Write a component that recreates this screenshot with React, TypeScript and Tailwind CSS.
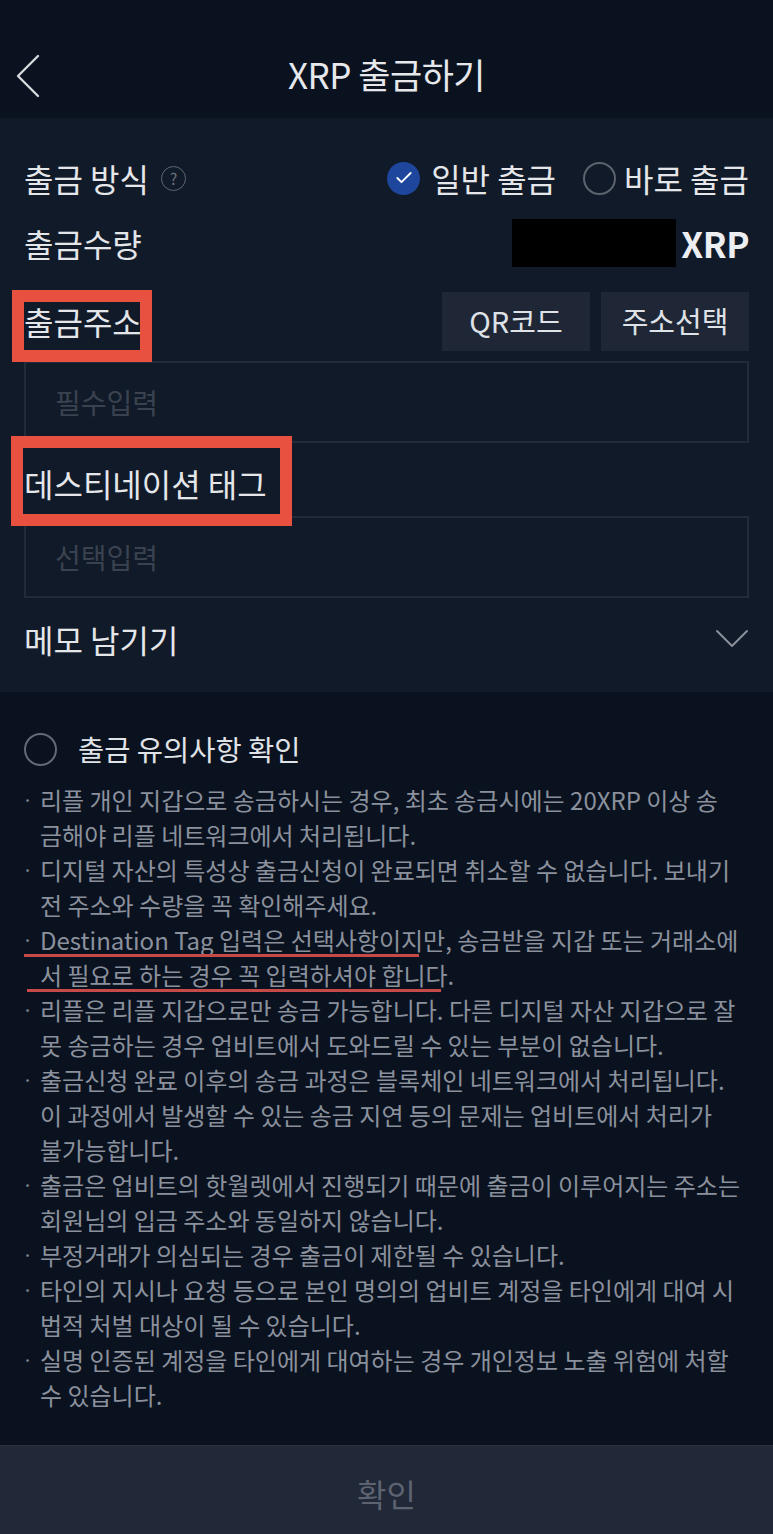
import { Check } from 'lucide-react'

const notices = [
  ['리플 개인 지갑으로 송금하시는 경우, 최초 송금시에는 20XRP 이상 송', '금해야 리플 네트워크에서 처리됩니다.'],
  ['디지털 자산의 특성상 출금신청이 완료되면 취소할 수 없습니다. 보내기', '전 주소와 수량을 꼭 확인해주세요.'],
  ['Destination Tag 입력은 선택사항이지만, 송금받을 지갑 또는 거래소에', '서 필요로 하는 경우 꼭 입력하셔야 합니다.'],
  ['리플은 리플 지갑으로만 송금 가능합니다. 다른 디지털 자산 지갑으로 잘', '못 송금하는 경우 업비트에서 도와드릴 수 있는 부분이 없습니다.'],
  ['출금신청 완료 이후의 송금 과정은 블록체인 네트워크에서 처리됩니다.', '이 과정에서 발생할 수 있는 송금 지연 등의 문제는 업비트에서 처리가', '불가능합니다.'],
  ['출금은 업비트의 핫월렛에서 진행되기 때문에 출금이 이루어지는 주소는', '회원님의 입금 주소와 동일하지 않습니다.'],
  ['부정거래가 의심되는 경우 출금이 제한될 수 있습니다.'],
  ['타인의 지시나 요청 등으로 본인 명의의 업비트 계정을 타인에게 대여 시', '법적 처벌 대상이 될 수 있습니다.'],
  ['실명 인증된 계정을 타인에게 대여하는 경우 개인정보 노출 위험에 처할', '수 있습니다.'],
]

// red underline marks drawn over the Destination Tag notice: [left offset, width]
const underlined: Record<string, [number, number]> = {
  '2-0': [-16, 395],
  '2-1': [-13, 414],
}

export default function App() {
  return (
    <div className="w-[773px] h-[1534px] bg-[#0a1220] flex flex-col font-['Noto_Sans_CJK_KR','Noto_Sans',sans-serif] overflow-hidden">
      {/* header */}
      <div className="h-[118px] relative flex items-center justify-center shrink-0 pt-[30px]">
        <svg className="absolute left-[14px] top-[54px]" width="28" height="44" viewBox="0 0 28 44" fill="none">
          <path d="M24 2 L4 22 L24 42" stroke="#d5d8dd" strokeWidth="2.4" strokeLinecap="round" strokeLinejoin="round" />
        </svg>
        <span className="text-[35px] text-[#e6e8ec] tracking-[-0.5px]">XRP 출금하기</span>
      </div>

      {/* form */}
      <div className="h-[574px] bg-[#111a28] px-[24px] pt-[30px] shrink-0 flex flex-col">
        <div className="h-[60px] flex items-center justify-between">
          <div className="flex items-center gap-[12px]">
            <span className="text-[32px] text-[#e4e6ea]">출금 방식</span>
            <span className="w-[25px] h-[25px] rounded-full border-[1.5px] border-[#5f6672] flex items-center justify-center text-[16px] text-[#6a717c] leading-none">?</span>
          </div>
          <div className="flex items-center">
            <span className="w-[33px] h-[33px] rounded-full bg-[#1d469c] flex items-center justify-center">
              <Check className="w-[20px] h-[20px] text-white" strokeWidth={2.2} />
            </span>
            <span className="ml-[11px] text-[32px] text-[#e4e6ea]">일반 출금</span>
            <span className="ml-[27px] w-[33px] h-[33px] rounded-full border-2 border-[#5c636e]" />
            <span className="ml-[8px] text-[32px] text-[#e4e6ea]">바로 출금</span>
          </div>
        </div>

        <div className="h-[60px] mt-[5px] flex items-center justify-between">
          <span className="text-[32px] text-[#e4e6ea]">출금수량</span>
          <div className="flex items-center">
            <span className="w-[164px] h-[48px] bg-black" />
            <span className="ml-[5px] text-[35px] font-bold text-[#eceef1] tracking-[-0.5px]">XRP</span>
          </div>
        </div>

        <div className="relative h-[60px] mt-[18px] flex items-center justify-between">
          <span className="text-[32px] text-[#e4e6ea]">출금주소</span>
          <div className="absolute left-[-12px] top-[-1px] w-[140px] h-[72px] border-[12px] border-[#e8503f]" />
          <div className="flex gap-[11px]">
            <button className="w-[148px] h-[59px] bg-[#1f2736] text-[29px] text-[#dfe2e6]">QR코드</button>
            <button className="w-[148px] h-[59px] bg-[#1f2736] text-[29px] text-[#dfe2e6]">주소선택</button>
          </div>
        </div>

        <div className="h-[82px] mt-[10px] border-2 border-[#232b39] flex items-center px-[29px] text-[28px] text-[#3a4250]">필수입력</div>

        <div className="relative h-[60px] mt-[10px] flex items-center">
          <span className="text-[32px] text-[#e4e6ea]">데스티네이션 태그</span>
          <div className="absolute left-[-13px] top-[-17px] w-[281px] h-[90px] border-[12px] border-[#e8503f]" />
        </div>

        <div className="h-[82px] mt-[3px] border-2 border-[#232b39] flex items-center px-[29px] text-[28px] text-[#3a4250]">선택입력</div>

        <div className="h-[60px] mt-[11px] flex items-center justify-between">
          <span className="text-[32px] text-[#e4e6ea]">메모 남기기</span>
          <svg width="34" height="20" viewBox="0 0 34 20" fill="none">
            <path d="M2 2 L17 17 L32 2" stroke="#8a8f99" strokeWidth="2" strokeLinecap="round" strokeLinejoin="round" />
          </svg>
        </div>
      </div>

      {/* notices */}
      <div className="flex-1 px-[24px] pt-[37px]">
        <div className="h-[40px] flex items-center">
          <span className="w-[33px] h-[33px] rounded-full border-2 border-[#646a75]" />
          <span className="ml-[21px] text-[28.5px] text-[#e0e3e7]">출금 유의사항 확인</span>
        </div>
        <div className="mt-[13px]">
          {notices.map((lines, i) => (
            <div key={i} className="flex">
              <span className="w-[16px] shrink-0 h-[35px] leading-[35px] text-[20px] text-[#7c828d] -ml-[2px] mr-[2px]">·</span>
              <div>
                {lines.map((line, j) => {
                  const mark = underlined[`${i}-${j}`]
                  return (
                    <div key={j} className="relative h-[35px] leading-[35px] whitespace-nowrap text-[24px] text-[#8b919c]">
                      {line}
                      {mark && (
                        <div
                          className="absolute top-[32px] h-[3px] bg-[#c84a48]"
                          style={{ left: mark[0], width: mark[1] }}
                        />
                      )}
                    </div>
                  )
                })}
              </div>
            </div>
          ))}
        </div>
      </div>

      {/* confirm */}
      <button className="h-[89px] shrink-0 bg-[#212837] border-t border-[#2a3140] pt-[6px] text-[32px] text-[#5d6370]">확인</button>
    </div>
  )
}
